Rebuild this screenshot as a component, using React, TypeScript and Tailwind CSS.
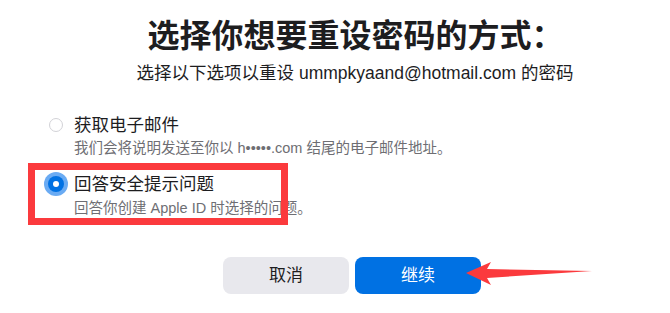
import React from "react";

const FONT = { fontFamily: '"Liberation Sans", "Noto Sans CJK SC", sans-serif' };

function Option({
  selected,
  label,
  desc,
  className,
}: {
  selected: boolean;
  label: string;
  desc: string;
  className?: string;
}) {
  return (
    <div className={"flex flex-col " + (className ?? "")}>
      <div className="flex items-center">
        <div className="w-[24px] flex items-center justify-center">
          {selected ? (
            <div className="w-[24px] h-[24px] rounded-full bg-[#6aabf3] flex items-center justify-center">
              <div className="w-[16px] h-[16px] rounded-full bg-[#0071e3] flex items-center justify-center">
                <div className="w-[6px] h-[6px] rounded-full bg-white" />
              </div>
            </div>
          ) : (
            <div className="w-[14px] h-[14px] rounded-full border border-[#d2d2d7] bg-white" />
          )}
        </div>
        <div className="ml-[6px] text-[17.5px] leading-[22px] text-[#1d1d1f]">{label}</div>
      </div>
      <div className="ml-[30px] mt-[3px] text-[14.5px] leading-[18px] text-[#6e6e73]">{desc}</div>
    </div>
  );
}

export default function App() {
  return (
    <div className="relative w-[670px] h-[313px] bg-white overflow-hidden" style={FONT}>
      <div className="text-center">
        <h1 className="pl-[41px] pt-[17px] text-[32px] leading-[39px] font-bold text-[#1d1d1f]">
          选择你想要重设密码的方式：
        </h1>
        <p className="pl-[40px] mt-[6px] text-[17.5px] leading-[22px] text-[#1d1d1f]">
          选择以下选项以重设 ummpkyaand@hotmail.com 的密码
        </p>
      </div>

      <div className="ml-[44px] mt-[30px] flex flex-col">
        <Option
          selected={false}
          label="获取电子邮件"
          desc="我们会将说明发送至你以 h•••••.com 结尾的电子邮件地址。"
        />
        <Option
          selected={true}
          label="回答安全提示问题"
          desc="回答你创建 Apple ID 时选择的问题。"
          className="mt-[15px]"
        />
      </div>

      <div className="ml-[223px] mt-[40px] flex gap-[6px]">
        <button className="w-[126px] h-[37px] rounded-[8px] bg-[#e8e8ed] text-[17px] text-[#1d1d1f]">
          取消
        </button>
        <button className="w-[126px] h-[37px] rounded-[8px] bg-[#0071e3] text-[17px] text-white">
          继续
        </button>
      </div>

      {/* annotation: red box */}
      <div className="absolute left-[28px] top-[163px] w-[260px] h-[62px] border-[7px] border-[#fb3a3d] pointer-events-none" />

      {/* annotation: arrow */}
      <svg
        className="absolute left-[460px] top-[255px] pointer-events-none"
        width="140"
        height="40"
        viewBox="460 255 140 40"
      >
        <polygon
          points="466,273 491,262 487,269 592,271 487,278 491,285"
          fill="#fb3a3d"
        />
      </svg>
    </div>
  );
}
